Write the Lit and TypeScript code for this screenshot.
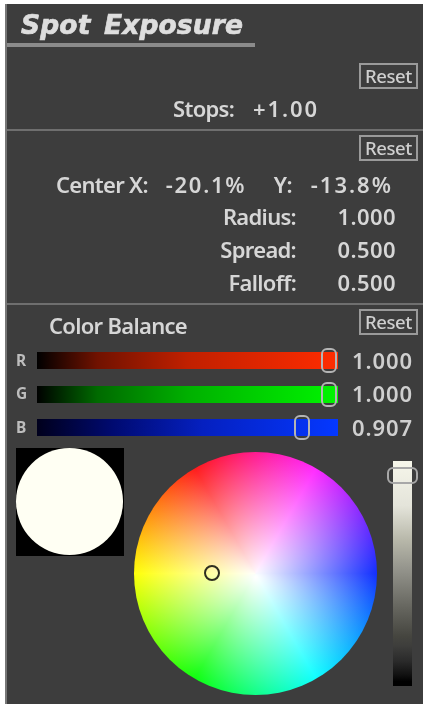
import { LitElement, html, css } from "lit";
import { customElement } from "lit/decorators.js";

const sliders = [
  { k: "R", c: "r", v: "1.000", x: 284 },
  { k: "G", c: "g", v: "1.000", x: 284 },
  { k: "B", c: "b", v: "0.907", x: 257 },
];

@customElement("app-root")
export class AppRoot extends LitElement {
  static styles = css`
    :host {
      display: block;
      width: 423px;
      height: 704px;
      background: #fff;
      padding: 4px 0 0 5px;
      box-sizing: border-box;
      overflow: hidden;
      font-family: "Noto Sans", sans-serif;
      color: #d6d6d6;
    }
    .panel {
      height: 700px;
      background: #3d3d3d;
      border-left: 2px solid #777;
      box-sizing: border-box;
      filter: blur(0.45px);
    }
    .head {
      width: 248px;
      height: 43px;
      box-sizing: border-box;
      border-bottom: 4px solid #8b8b8b;
      padding-left: 14px;
      font: italic 700 26.5px/41px "DejaVu Sans", sans-serif;
      -webkit-text-stroke: 0.7px #dedede;
      letter-spacing: 0.15px;
      word-spacing: 4px;
      color: #dedede;
      white-space: nowrap;
    }
    .sec {
      border-bottom: 2px solid #6f6f6f;
      box-sizing: border-box;
      font-weight: 600;
      font-size: 22px;
      letter-spacing: -0.7px;
    }
    .s1 { height: 84px; padding-top: 16px; }
    .s2 { height: 174px; padding-top: 5px; }
    .resetrow { display: flex; justify-content: flex-end; padding-right: 5px; }
    .reset {
      width: 59px;
      height: 26px;
      box-sizing: border-box;
      border: 2px solid #9a9a9a;
      font-size: 18.5px;
      font-weight: 500;
      letter-spacing: -0.4px;
      line-height: 21px;
      text-align: center;
      color: #cfcfcf;
    }
    .s2 .resetrow { margin-top: -1px; }
    .row { display: flex; height: 33px; line-height: 33px; white-space: nowrap; }
    .stops { margin-top: 3px; padding-left: 166px; }
    .stops .val { margin-left: 19px; letter-spacing: 1.9px; }
    .center { margin-top: 7px; padding-left: 49px; height: 32px; line-height: 32px; }
    .center .x { margin-left: 18px; letter-spacing: 1.7px; width: 108px; }
    .center .y { margin-left: 19px; letter-spacing: 2px; }
    .param .lab { width: 289px; text-align: right; }
    .param .val { width: 100px; text-align: right; letter-spacing: 0.4px; }
    .s3 { padding-top: 4px; font-weight: 600; font-size: 22px; letter-spacing: -0.7px; }
    .cbhead { display: flex; justify-content: space-between; padding-right: 5px; height: 34px; }
    .cbtitle { padding-left: 42px; line-height: 32px; }
    .slider { display: flex; align-items: center; height: 33.5px; padding-left: 9px; }
    .slabel { width: 21px; font-size: 15.5px; font-weight: 700; letter-spacing: 0; color: #bdbdbd; }
    .track { position: relative; width: 301px; height: 17px; top: 1px; }
    .track.r { background: linear-gradient(90deg, #000, #701200 20%, #c02000 50%, #ff2c00); }
    .track.g { background: linear-gradient(90deg, #000, #006a00 20%, #00b000 50%, #00f500); }
    .track.b { background: linear-gradient(90deg, #00001c, #000a70 25%, #0520c0 55%, #0538ff); }
    .thumb {
      position: absolute;
      top: -4px;
      width: 16px;
      height: 25px;
      box-sizing: border-box;
      border: 2px solid #b4b4b4;
      border-radius: 6px;
    }
    .sval { width: 75px; text-align: right; font-size: 22px; letter-spacing: 0.9px; color: #cfcfcf; }
    .picker { display: flex; padding: 4px 0 0 9px; align-items: flex-start; }
    .swatch { width: 108px; height: 108px; background: #000; flex: none; }
    .swatch div { width: 107px; height: 107px; border-radius: 50%; background: #fffff3; }
    .wheel {
      position: relative;
      flex: none;
      width: 243px;
      height: 243px;
      margin: 4px 0 0 10px;
      border-radius: 50%;
      background:
        radial-gradient(circle at 50% 51.5%, #fff 0, rgba(255,255,255,0) 72%),
        conic-gradient(#ff1a90 0deg, #ff28ff 30deg, #0a28ff 90deg, #00ffff 150deg, #00ff00 210deg, #ffff00 270deg, #ff1a1a 330deg, #ff1a90 360deg);
    }
    .marker {
      position: absolute;
      left: 70px;
      top: 113px;
      width: 16px;
      height: 16px;
      box-sizing: border-box;
      border-radius: 50%;
      border: 2.5px solid #2e2e20;
    }
    .value {
      position: relative;
      flex: none;
      width: 19px;
      height: 225px;
      margin: 13px 0 0 16px;
      background: linear-gradient(#f6f6ea 0%, #e4e4da 20%, #b8b8aa 35%, #94948c 48%, #66665f 65%, #45453f 78%, #3e3e3c 82%, #2a2a2a 89%, #111 95%, #000 98%);
    }
    .vthumb {
      position: absolute;
      left: -6px;
      top: 6px;
      width: 31px;
      height: 17px;
      box-sizing: border-box;
      border: 2px solid #a8a8a8;
      border-radius: 6px;
    }
  `;

  render() {
    return html`<div class="panel">
      <div class="head">Spot Exposure</div>
      <div class="sec s1">
        <div class="resetrow"><div class="reset">Reset</div></div>
        <div class="row stops"><span>Stops:</span><span class="val">+1.00</span></div>
      </div>
      <div class="sec s2">
        <div class="resetrow"><div class="reset">Reset</div></div>
        <div class="row center">
          <span>Center X:</span><span class="x">-20.1%</span><span>Y:</span><span class="y">-13.8%</span>
        </div>
        <div class="row param"><span class="lab">Radius:</span><span class="val">1.000</span></div>
        <div class="row param"><span class="lab">Spread:</span><span class="val">0.500</span></div>
        <div class="row param"><span class="lab">Falloff:</span><span class="val">0.500</span></div>
      </div>
      <div class="s3">
        <div class="cbhead"><span class="cbtitle">Color Balance</span><div class="reset">Reset</div></div>
        ${sliders.map(
          (s) => html`<div class="slider">
            <span class="slabel">${s.k}</span>
            <div class="track ${s.c}"><div class="thumb" style="left:${s.x}px"></div></div>
            <span class="sval">${s.v}</span>
          </div>`
        )}
        <div class="picker">
          <div class="swatch"><div></div></div>
          <div class="wheel"><div class="marker"></div></div>
          <div class="value"><div class="vthumb"></div></div>
        </div>
      </div>
    </div>`;
  }
}
